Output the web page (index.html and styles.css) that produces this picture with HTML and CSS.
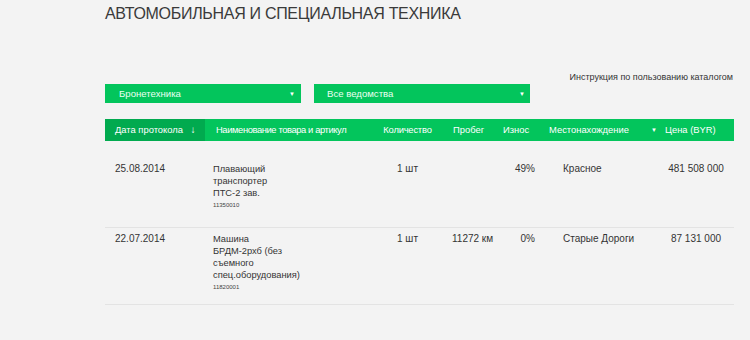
FILE: index.html
```html
<!DOCTYPE html>
<html lang="ru">
<head>
<meta charset="utf-8">
<title>Автомобильная и специальная техника</title>
<link rel="stylesheet" href="styles.css">
</head>
<body>
<div class="page">
  <h1 class="title">АВТОМОБИЛЬНАЯ И СПЕЦИАЛЬНАЯ ТЕХНИКА</h1>
  <div class="help-row"><a class="help" href="#">Инструкция по пользованию каталогом</a></div>
  <div class="filters">
    <div class="select sel-type"><span>Бронетехника</span><span class="tri">▼</span></div>
    <div class="select sel-dept"><span>Все ведомства</span><span class="tri">▼</span></div>
  </div>
  <div class="table">
    <div class="thead">
      <div class="th c-date">Дата протокола <span class="down">↓</span></div>
      <div class="th c-name">Наименование товара и артикул</div>
      <div class="th c-qty">Количество</div>
      <div class="th c-run">Пробег</div>
      <div class="th c-wear">Износ</div>
      <div class="th c-loc">Местонахождение <span class="tri hdr-tri">▼</span></div>
      <div class="th c-price">Цена (BYR)</div>
    </div>
    <div class="row first">
      <div class="td c-date">25.08.2014</div>
      <div class="td c-name"><div class="name">Плавающий транспортер ПТС-2 зав.</div><div class="art">11350010</div></div>
      <div class="td c-qty">1 шт</div>
      <div class="td c-run"></div>
      <div class="td c-wear">49%</div>
      <div class="td c-loc">Красное</div>
      <div class="td c-price">481 508 000</div>
    </div>
    <div class="row">
      <div class="td c-date">22.07.2014</div>
      <div class="td c-name"><div class="name">Машина БРДМ-2рхб (без съемного спец.оборудования)</div><div class="art">11820001</div></div>
      <div class="td c-qty">1 шт</div>
      <div class="td c-run">11272 км</div>
      <div class="td c-wear">0%</div>
      <div class="td c-loc">Старые Дороги</div>
      <div class="td c-price">87 131 000</div>
    </div>
  </div>
</div>
</body>
</html>
```
FILE: styles.css
```css
html, body {
  margin: 0;
  padding: 0;
  background: #f3f3f3;
  font-family: "Liberation Sans", Arial, sans-serif;
  color: #333;
}
.page {
  width: 629px;
  margin-left: 105px;
}
.title {
  margin: 0;
  padding-top: 4px;
  font-size: 16px;
  line-height: 20px;
  font-weight: normal;
  color: #3a3a3a;
  letter-spacing: -0.3px;
}
.help-row {
  display: flex;
  justify-content: flex-end;
  margin-top: 47px;
  height: 12px;
  line-height: 12px;
}
.help {
  font-size: 9px;
  color: #333;
  text-decoration: none;
  margin-right: 1px;
}
.filters {
  display: flex;
  gap: 13px;
  margin-top: 1px;
}
.select {
  height: 19px;
  background: #03c55c;
  color: #eafff2;
  font-size: 9.6px;
  display: flex;
  align-items: center;
  justify-content: space-between;
  box-sizing: border-box;
}
.sel-type {
  width: 196px;
  padding: 0 6px 0 14px;
}
.sel-dept {
  width: 216px;
  padding: 0 5px 0 13px;
}
.tri {
  font-size: 6px;
  color: #fff;
}
.table {
  margin-top: 16px;
}
.thead, .row {
  display: grid;
  grid-template-columns: 100px 165px 75px 50px 45px 118px 76px;
}
.thead {
  height: 22px;
  background: #03c55c;
  color: #fff;
  font-size: 9.4px;
  line-height: 22px;
}
.th {
  white-space: nowrap;
}
.th.c-date {
  background: #01aa4f;
  padding-left: 10px;
}
.down {
  margin-left: 5px;
  font-size: 10px;
}
.th.c-name { padding-left: 11px; letter-spacing: -0.4px; }
.th.c-qty { text-align: center; letter-spacing: -0.2px; }
.th.c-run { padding-left: 8px; }
.th.c-wear { padding-left: 8px; }
.th.c-loc {
  padding-left: 9px;
  display: flex;
  justify-content: space-between;
}
.hdr-tri { margin-right: 1px; }
.th.c-price { padding-left: 7px; }
.row {
  font-size: 10px;
  line-height: 12px;
  color: #333;
  border-bottom: 1px solid #e3e3e3;
  padding: 5px 0 11px;
}
.row.first {
  padding-top: 22px;
  padding-bottom: 16px;
}
.td.c-date { padding-left: 10px; }
.td.c-name { padding-left: 8px; }
.name { width: 78px; font-size: 9.3px; }
.art {
  font-size: 6px;
  line-height: 12px;
  color: #444;
}
.td.c-qty { text-align: center; }
.td.c-run { padding-left: 7px; }
.td.c-wear { text-align: right; padding-right: 5px; }
.td.c-loc { padding-left: 23px; }
.td.c-price { text-align: center; }
```
